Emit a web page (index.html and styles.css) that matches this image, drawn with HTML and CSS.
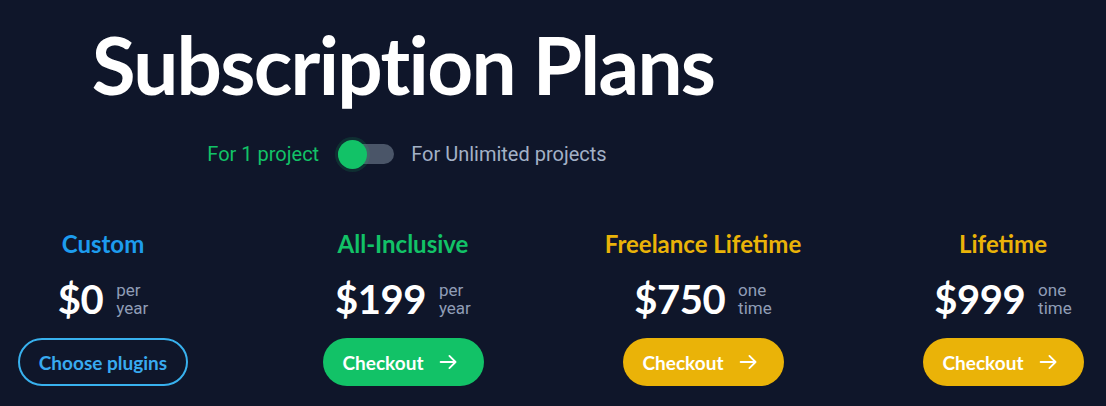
FILE: index.html
```html
<!DOCTYPE html>
<html lang="en">
<head>
<meta charset="utf-8">
<title>Subscription Plans</title>
<link rel="stylesheet" href="styles.css">
</head>
<body>
<div class="page">
  <div class="container">
    <header class="header">
      <h1 class="title">Subscription Plans</h1>
      <div class="switch-row">
        <span class="switch-label active">For 1 project</span>
        <span class="switch"><span class="knob"></span></span>
        <span class="switch-label">For Unlimited projects</span>
      </div>
    </header>
    <section class="plans">
      <div class="plan">
        <h2 class="plan-name blue">Custom</h2>
        <div class="price"><span class="amount">$0</span><span class="period"><span class="line">per</span><span class="line">year</span></span></div>
        <a class="btn btn-outline">Choose plugins</a>
      </div>
      <div class="plan">
        <h2 class="plan-name green">All-Inclusive</h2>
        <div class="price"><span class="amount">$199</span><span class="period"><span class="line">per</span><span class="line">year</span></span></div>
        <a class="btn btn-green">Checkout
          <svg class="arrow" viewBox="0 0 24 24" width="24" height="24"><path d="M3 12h17M13 5l7 7-7 7" fill="none" stroke="#fff" stroke-width="2.1" stroke-linecap="round" stroke-linejoin="round"/></svg>
        </a>
      </div>
      <div class="plan">
        <h2 class="plan-name yellow">Freelance Lifetime</h2>
        <div class="price"><span class="amount">$750</span><span class="period"><span class="line">one</span><span class="line">time</span></span></div>
        <a class="btn btn-yellow">Checkout
          <svg class="arrow" viewBox="0 0 24 24" width="24" height="24"><path d="M3 12h17M13 5l7 7-7 7" fill="none" stroke="#fff" stroke-width="2.1" stroke-linecap="round" stroke-linejoin="round"/></svg>
        </a>
      </div>
      <div class="plan">
        <h2 class="plan-name yellow">Lifetime</h2>
        <div class="price"><span class="amount">$999</span><span class="period"><span class="line">one</span><span class="line">time</span></span></div>
        <a class="btn btn-yellow">Checkout
          <svg class="arrow" viewBox="0 0 24 24" width="24" height="24"><path d="M3 12h17M13 5l7 7-7 7" fill="none" stroke="#fff" stroke-width="2.1" stroke-linecap="round" stroke-linejoin="round"/></svg>
        </a>
      </div>
    </section>
  </div>
</div>
</body>
</html>
```

FILE: styles.css
```css
* { box-sizing: border-box; }
html, body {
  margin: 0;
  padding: 0;
  background: #0f162a;
  overflow: hidden;
}
.page {
  display: flex;
  justify-content: center;
  width: 1106px;
  height: 406px;
  overflow: hidden;
}
.container {
  flex: 0 0 1200px;
  width: 1200px;
}
.header {
  width: 900px;
  text-align: center;
  padding-top: 18px;
}
.title {
  margin: 0;
  font-family: "Lato", "Open Sans", sans-serif;
  font-weight: 700;
  font-size: 80px;
  line-height: 92px;
  color: #ffffff;
  letter-spacing: -1.7px;
}
.switch-row {
  display: flex;
  justify-content: center;
  align-items: center;
  gap: 17px;
  margin-top: 29px;
  padding-left: 8px;
  height: 30px;
  font-family: "Roboto", sans-serif;
  font-size: 20px;
  color: #a3b1c6;
}
.switch-label.active { color: #12c267; margin-right: 2px; }
.switch {
  display: flex;
  align-items: center;
  width: 56px;
  height: 20px;
  border-radius: 10px;
  background: #4a5568;
}
.knob {
  width: 29px;
  height: 29px;
  border-radius: 50%;
  background: #12c267;
  box-shadow: 0 0 0 3px rgba(18, 194, 103, 0.15);
}
.plans {
  display: grid;
  grid-template-columns: repeat(4, 300px);
  margin-top: 60px;
}
.plan {
  display: flex;
  flex-direction: column;
  align-items: center;
}
.plan-name {
  margin: 0;
  font-family: "Lato", "Open Sans", sans-serif;
  font-weight: 700;
  font-size: 24px;
  line-height: 30px;
}
.blue { color: #1d9cee; }
.green { color: #12c267; }
.yellow { color: #eab308; }
.price {
  display: flex;
  align-items: center;
  gap: 13px;
  margin-top: 12px;
  height: 56px;
}
.amount {
  font-family: "Lato", "Open Sans", sans-serif;
  font-weight: 700;
  font-size: 40px;
  color: #ffffff;
  letter-spacing: -0.5px;
}
.period {
  display: flex;
  flex-direction: column;
  font-family: "Roboto", sans-serif;
  font-size: 17px;
  color: #8f9db6;
}
.line {
  display: block;
  height: 18px;
  line-height: 18px;
}
.btn {
  display: flex;
  align-items: center;
  height: 48px;
  border-radius: 24px;
  font-family: "Lato", "Open Sans", sans-serif;
  font-weight: 700;
  font-size: 19px;
  margin-top: 11px;
}
.btn-outline {
  padding: 0 19px;
  border: 2px solid #38b1ee;
  color: #38aaf0;
}
.btn-green, .btn-yellow {
  padding: 0 24px 0 20px;
  color: #ffffff;
  gap: 15px;
  width: 161px;
}
.btn-green { background: #12c267; }
.btn-yellow { background: #eab308; }
.arrow { display: block; }
```
